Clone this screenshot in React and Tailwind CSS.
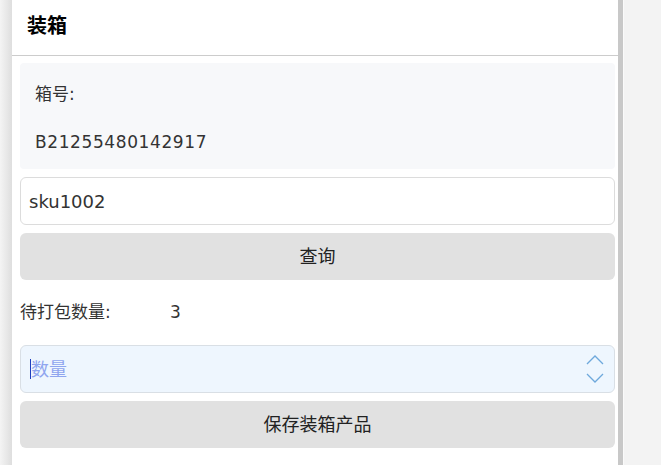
export default function App() {
  const font = { fontFamily: '"DejaVu Sans", "Noto Sans CJK SC", sans-serif' };

  return (
    <div className="flex h-screen w-full overflow-hidden bg-[#f3f3f3]" style={font}>
      {/* left edge shadow */}
      <div className="w-[12px] shrink-0 bg-gradient-to-r from-[#f4f4f4] to-[#dedede]" />

      {/* main panel */}
      <div className="w-[606px] shrink-0 bg-white">
        <div className="h-[56px] border-b border-[#cccccc] pl-[15px] flex items-center">
          <h1 className="text-[20px] font-bold text-black leading-none pb-[4px]">装箱</h1>
        </div>

        <div className="pl-2 pr-[3px] pt-[7px] flex flex-col">
          {/* box number card */}
          <div className="bg-[#f7f8fa] rounded-[4px] px-[15px] pt-[19px] pb-[15px] h-[106px]">
            <div className="text-[17px] leading-[24px] text-[#333]">箱号:</div>
            <div className="mt-[24px] text-[17px] leading-[24px] text-[#333] tracking-[0.6px]">
              B21255480142917
            </div>
          </div>

          <div className="mt-[8px] h-[48px] rounded-[6px] border border-[#dcdcdc] bg-white flex items-center pl-[8px] text-[18px] text-[#333]">
            sku1002
          </div>

          <button className="mt-[8px] h-[47px] rounded-[6px] bg-[#e1e1e1] text-[18px] text-[#222] flex items-center justify-center">
            查询
          </button>

          <div className="mt-[19px] h-[28px] flex items-center text-[17px] text-[#333]">
            <span className="w-[150px]">待打包数量:</span>
            <span className="text-[17px]">3</span>
          </div>

          {/* quantity input */}
          <div className="mt-[18px] h-[48px] rounded-[6px] border border-[#d9dfe5] bg-[#eef6fe] flex items-center pl-[9px] pr-[10px]">
            <span className="w-[1px] h-[20px] bg-[#1e3fbf]" />
            <span className="text-[18px] text-[#8fa5ef]">数量</span>
            <svg className="ml-auto" width="18" height="30" viewBox="0 0 18 30" fill="none" stroke="#6ea8dc" strokeWidth="1.3">
              <polyline points="1,10 9,2 17,10" />
              <polyline points="1,20 9,28 17,20" />
            </svg>
          </div>

          <button className="mt-[8px] h-[47px] rounded-[6px] bg-[#e1e1e1] text-[18px] text-[#222] flex items-center justify-center">
            保存装箱产品
          </button>
        </div>
      </div>

      {/* scrollbar */}
      <div className="w-[5px] shrink-0 bg-[#c8c8c8]" />
      <div className="w-[1px] shrink-0 bg-[#fafafa]" />
      <div className="flex-1 bg-[#f3f3f3]" />
    </div>
  );
}
